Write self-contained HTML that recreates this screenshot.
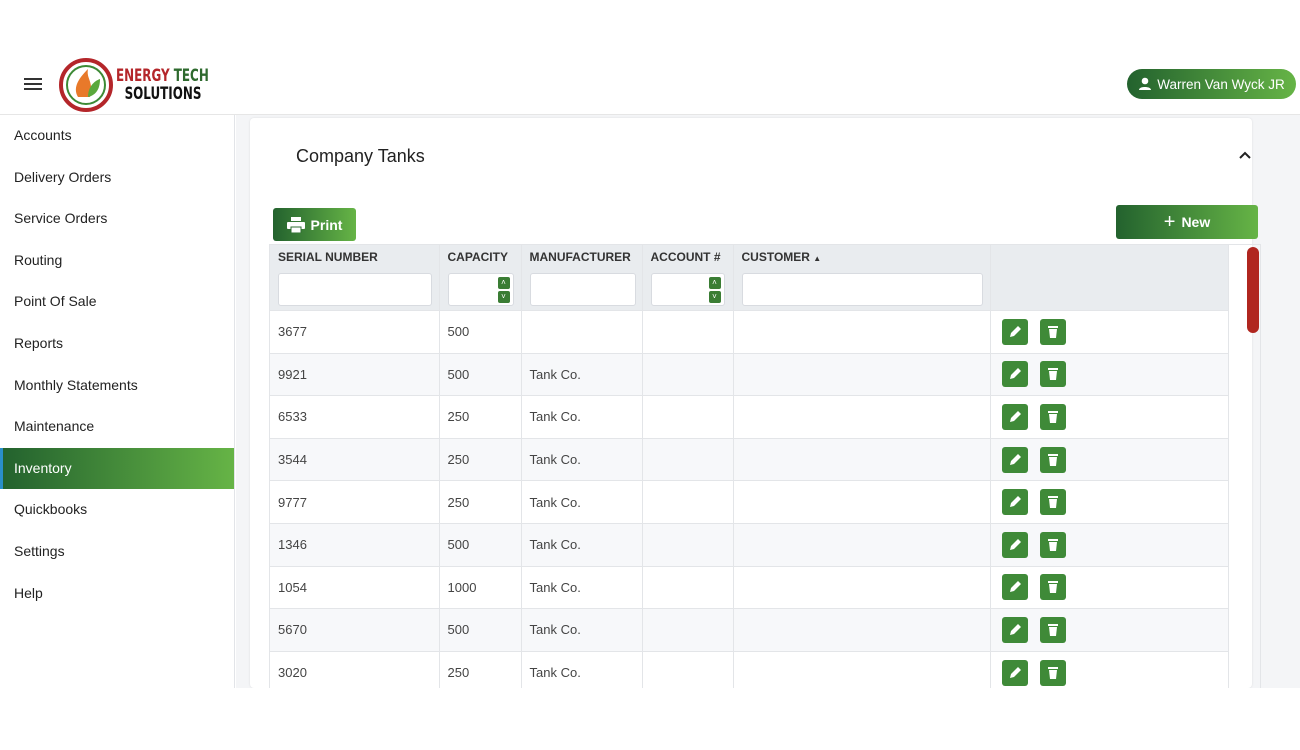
<!DOCTYPE html>
<html><head><meta charset="utf-8"><style>
*{box-sizing:border-box;margin:0;padding:0}
body{width:1300px;height:750px;background:#fff;font-family:"Liberation Sans",Arial,sans-serif;position:relative;overflow:hidden;color:#333}
.top{position:absolute;left:0;top:55px;width:1300px;height:60px;background:#fff;border-bottom:1px solid #e6e6e6}
.side{position:absolute;left:0;top:115px;width:235px;height:573px;background:#fff;border-right:1px solid #e2e4e8}
.side div{height:41.6px;line-height:41.6px;padding-left:14px;font-size:14px;color:#222}
.side .act{background:linear-gradient(90deg,#23622e,#66b446);color:#fff;border-left:3px solid #2a8fc9;padding-left:11px}
.main{position:absolute;left:236px;top:115px;width:1064px;height:573px;background:#f4f5f7}
.card{position:absolute;left:250px;top:118px;width:1002px;height:570px;background:#fff;border-radius:4px;box-shadow:0 0 2px rgba(0,0,0,.1)}
.btn{position:absolute;color:#fff;font-weight:bold;font-size:14px;border-radius:3px;background:linear-gradient(90deg,#23622e,#66b446);display:flex;align-items:center;justify-content:center;gap:6px}
table{position:absolute;left:270px;top:245px;border-collapse:collapse;font-size:13px}
td,th{border-right:1px solid #e3e5e8;text-align:left;padding-left:8px}
th{background:#e9ecef;height:23px;font-size:12px;color:#333;font-weight:bold}
tr.f td{background:#e9ecef;height:42px}
tr.r td{height:42.6px;border-top:1px solid #e3e5e8;color:#444}
tr.r:nth-child(even) td{background:#f7f8fa}
.in{height:33px;background:#fff;border:1px solid #d8dbe0;border-radius:3px;position:relative}
.sp{position:absolute;right:3px;width:12px;height:12px;background:#3a7d34;border-radius:2px;color:#fff;font-size:8px;line-height:12px;text-align:center}
.ib{display:inline-block;width:26px;height:26px;background:#3f8a38;border-radius:3px;vertical-align:middle;margin-right:8px;position:relative}
</style></head><body>
<div class="top">
 <div style="position:absolute;left:24px;top:23px;width:18px;height:2px;background:#333;box-shadow:0 5px 0 #333,0 10px 0 #333"></div>
 <svg style="position:absolute;left:58px;top:2px" width="56" height="56" viewBox="0 0 56 56"><circle cx="28" cy="28" r="25" fill="none" stroke="#b4262a" stroke-width="4"/><circle cx="28" cy="28" r="19" fill="none" stroke="#3d8a35" stroke-width="2"/><path d="M20 40 C14 30 22 20 30 12 C28 22 36 24 32 40Z" fill="#e8792a"/><path d="M30 40 C30 30 36 24 42 22 C42 32 38 38 30 40Z" fill="#5aa83c"/></svg>
 <div style="position:absolute;left:116px;top:12px;font-family:'DejaVu Sans Condensed','DejaVu Sans',sans-serif;font-weight:bold;font-size:17px;line-height:18px;transform:scaleX(.78);transform-origin:0 0;white-space:nowrap"><span style="color:#b4262a">ENERGY</span> <span style="color:#2e6a2e">TECH</span><br><span style="color:#111;margin-left:11px">SOLUTIONS</span></div>
 <div class="btn" style="left:1127px;top:14px;width:169px;height:30px;border-radius:15px;font-weight:normal;font-size:13.5px;gap:5px"><svg width="14" height="14" viewBox="0 0 14 14"><circle cx="7" cy="4" r="3.3" fill="#fff"/><path d="M1 13c0-4 12-4 12 0z" fill="#fff"/></svg>Warren Van Wyck JR</div>
</div>
<div class="side">
<div>Accounts</div><div>Delivery Orders</div><div>Service Orders</div><div>Routing</div><div>Point Of Sale</div><div>Reports</div><div>Monthly Statements</div><div>Maintenance</div><div class="act">Inventory</div><div>Quickbooks</div><div>Settings</div><div>Help</div>
</div>
<div class="main"></div>
<div class="card"></div>
<div style="position:absolute;left:296px;top:146px;font-size:18px;color:#222">Company Tanks</div>
<svg style="position:absolute;left:1239px;top:151px" width="12" height="8" viewBox="0 0 12 8"><path d="M1 7L6 2L11 7" fill="none" stroke="#222" stroke-width="2"/></svg>
<div class="btn" style="left:273px;top:208px;width:83px;height:33px"><svg width="18" height="16" viewBox="0 0 18 16"><rect x="4" y="0" width="10" height="4" fill="#fff"/><rect x="0" y="5" width="18" height="7" rx="1" fill="#fff"/><rect x="4" y="10" width="10" height="6" fill="#fff" stroke="#2d6e30" stroke-width="1"/></svg>Print</div>
<div class="btn" style="left:1116px;top:205px;width:142px;height:34px;font-size:14px"><span style="font-size:20px;font-weight:normal">+</span> New</div>
<div style="position:absolute;left:269px;top:244px;width:992px;height:444px;border:1px solid #e3e5e8;border-bottom:none"></div>
<div style="position:absolute;left:1247px;top:247px;width:12px;height:86px;background:#b0261f;border-radius:6px"></div>
<table>
<tr><th style="width:169px">SERIAL NUMBER</th><th style="width:82px">CAPACITY</th><th style="width:121px">MANUFACTURER</th><th style="width:91px">ACCOUNT #</th><th style="width:257px">CUSTOMER <span style="font-size:8px">▲</span></th><th style="width:238px"></th></tr>
<tr class="f"><td><div class="in" style="width:154px"></div></td><td><div class="in" style="width:66px"><div class="sp" style="top:3px">˄</div><div class="sp" style="top:17px">˅</div></div></td><td><div class="in" style="width:106px"></div></td><td><div class="in" style="width:74px"><div class="sp" style="top:3px">˄</div><div class="sp" style="top:17px">˅</div></div></td><td><div class="in" style="width:241px"></div></td><td></td></tr>
</table>
<table style="top:310px">
<colgroup><col style="width:169px"><col style="width:82px"><col style="width:121px"><col style="width:91px"><col style="width:257px"><col style="width:238px"></colgroup>
<tr class="r"><td>3677</td><td>500</td><td></td><td></td><td></td><td class="a"></td></tr>
<tr class="r"><td>9921</td><td>500</td><td>Tank Co.</td><td></td><td></td><td class="a"></td></tr>
<tr class="r"><td>6533</td><td>250</td><td>Tank Co.</td><td></td><td></td><td class="a"></td></tr>
<tr class="r"><td>3544</td><td>250</td><td>Tank Co.</td><td></td><td></td><td class="a"></td></tr>
<tr class="r"><td>9777</td><td>250</td><td>Tank Co.</td><td></td><td></td><td class="a"></td></tr>
<tr class="r"><td>1346</td><td>500</td><td>Tank Co.</td><td></td><td></td><td class="a"></td></tr>
<tr class="r"><td>1054</td><td>1000</td><td>Tank Co.</td><td></td><td></td><td class="a"></td></tr>
<tr class="r"><td>5670</td><td>500</td><td>Tank Co.</td><td></td><td></td><td class="a"></td></tr>
<tr class="r"><td>3020</td><td>250</td><td>Tank Co.</td><td></td><td></td><td class="a"></td></tr>
</table>
<div style="position:absolute;left:0;top:688px;width:1300px;height:62px;background:#fff"></div>
<script>
document.querySelectorAll('td.a').forEach(function(t){t.style.paddingLeft='11px';t.innerHTML='<span class="ib"><svg width="26" height="26" viewBox="0 0 26 26"><path d="M8 18l1-4 7-7 3 3-7 7z" fill="#fff"/></svg></span><span class="ib" style="margin-left:4px"><svg width="26" height="26" viewBox="0 0 26 26"><rect x="8" y="7" width="10" height="2" fill="#fff"/><path d="M9 10h8l-1 9h-6z" fill="#fff"/></svg></span>';});
</script>
</body></html>
